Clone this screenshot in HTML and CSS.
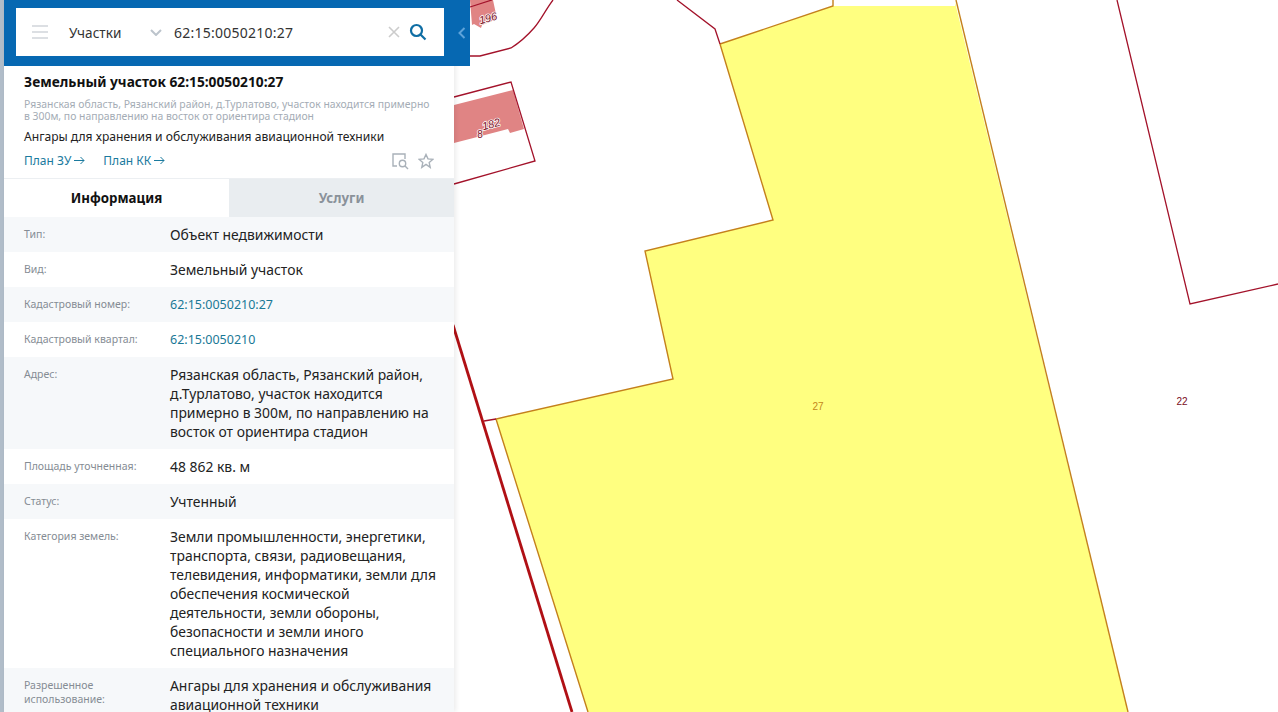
FILE: index.html
```html
<!DOCTYPE html>
<html lang="en">
<head>
    <meta charset="UTF-8">
    <title>Земельный участок 62:15:0050210:27</title>
    <link rel="stylesheet" href="styles.css">
</head>
<body>

    <!-- map layer -->
    <svg class="map" viewBox="0 0 1278 712">
        <polygon class="plot-selected" points="720,44 833,6 955,6 953,-6 1128,712 588,712 496,419 673,379 645,251 773,220"/>
        <rect class="map-blank" x="833" y="0" width="122" height="6"/>
        <polyline class="edge-selected" points="720,44 833,6 833,0"/>
        <polyline class="edge-selected" points="956,0 1128,712"/>
        <polyline class="edge-selected" points="588,712 496,419 673,379 645,251 773,220 720,44"/>

        <polygon class="building" points="454,105 513,90 524,129 510,133 508,129 485,135 454,143"/>
        <polygon class="building" points="470,0 493,0 497,19 482,25 481,28 474,24 472,25"/>
        <polyline class="edge" points="454,97 511,82 535,161 454,184"/>
        <polyline class="edge" points="470,7 492,0"/>
        <path class="edge" d="M553 0C546 9 541 20 534 28C527 36 519 43 511 48L480 56H470"/>
        <polyline class="edge" points="677,0 715,29 720,44"/>
        <polyline class="edge" points="1117,0 1190,304 1278,284"/>
        <polyline class="edge" points="484,421 496,419"/>
        <polyline class="edge-thick" points="453,325 572,712"/>

        <text class="label-num halo" x="480" y="138">8</text>
        <text class="label-num halo italic" x="491" y="128" transform="rotate(-15 491 124)">182</text>
        <text class="label-num halo italic" x="488" y="22" transform="rotate(-15 488 18)">196</text>
        <text class="label-num plot-num" x="818" y="410">27</text>
        <text class="label-num" x="1182" y="405">22</text>
    </svg>

    <div class="page">
        <aside class="panel">

            <div class="search-bar">
                <div class="search-box">
                    <svg class="icon-menu" width="16" height="14" viewBox="0 0 16 14">
                        <path d="M0 1h16M0 7h16M0 13h16"/>
                    </svg>
                    <span class="search-type">Участки</span>
                    <svg class="icon-chevron" width="12" height="7" viewBox="0 0 12 7">
                        <path d="M1 1l5 5 5-5"/>
                    </svg>
                    <span class="search-value">62:15:0050210:27</span>
                    <svg class="icon-clear" width="12" height="12" viewBox="0 0 12 12">
                        <path d="M1 1l10 10M11 1L1 11"/>
                    </svg>
                    <svg class="icon-search" width="18" height="18" viewBox="0 0 18 18">
                        <circle cx="7.5" cy="7.5" r="5.5"/>
                        <path d="M11.5 11.5l5 5"/>
                    </svg>
                </div>
                <div class="collapse-btn">
                    <svg width="8" height="12" viewBox="0 0 8 12"><path d="M6.500 1L1.500 6l5 5"/></svg>
                </div>
            </div>

            <div class="summary">
                <h1>Земельный участок 62:15:0050210:27</h1>
                <p class="summary-address">Рязанская область, Рязанский район, д.Турлатово, участок находится примерно в 300м, по направлению на восток от ориентира стадион</p>
                <p class="summary-use">Ангары для хранения и обслуживания авиационной техники</p>
                <div class="summary-links">
                    <a class="plan-link" href="#plan-zu">План ЗУ
                        <svg class="arrow" width="11" height="9" viewBox="0 0 11 9"><path d="M0 4.500h10M6.500 1l3.500 3.500L6.500 8"/></svg>
                    </a>
                    <a class="plan-link" href="#plan-kk">План КК
                        <svg class="arrow" width="11" height="9" viewBox="0 0 11 9"><path d="M0 4.500h10M6.500 1l3.500 3.500L6.500 8"/></svg>
                    </a>
                    <span class="summary-icons">
                        <svg width="17" height="17" viewBox="0 0 17 17">
                            <path d="M5 13H1V1h12v5"/>
                            <circle cx="10.500" cy="10.500" r="3.200"/>
                            <path d="M13 13l3 3"/>
                        </svg>
                        <svg width="16" height="16" viewBox="0 0 16 16">
                            <path d="M8 1.500l2 4.400 4.800.5-3.600 3.200 1 4.700L8 11.400l-4.200 2.900 1-4.700L1.200 6.400l4.800-.5z"/>
                        </svg>
                    </span>
                </div>
            </div>

            <div class="tabs">
                <div class="tab active">Информация</div>
                <div class="tab">Услуги</div>
            </div>

            <div class="info-list">
                <div class="info-row">
                    <div class="info-label">Тип:</div>
                    <div class="info-value">Объект недвижимости</div>
                </div>
                <div class="info-row">
                    <div class="info-label">Вид:</div>
                    <div class="info-value">Земельный участок</div>
                </div>
                <div class="info-row">
                    <div class="info-label">Кадастровый номер:</div>
                    <div class="info-value"><a href="#parcel">62:15:0050210:27</a></div>
                </div>
                <div class="info-row">
                    <div class="info-label">Кадастровый квартал:</div>
                    <div class="info-value"><a href="#quarter">62:15:0050210</a></div>
                </div>
                <div class="info-row">
                    <div class="info-label">Адрес:</div>
                    <div class="info-value">Рязанская область, Рязанский район, д.Турлатово, участок находится примерно в 300м, по направлению на восток от ориентира стадион</div>
                </div>
                <div class="info-row">
                    <div class="info-label">Площадь уточненная:</div>
                    <div class="info-value">48 862 кв. м</div>
                </div>
                <div class="info-row">
                    <div class="info-label">Статус:</div>
                    <div class="info-value">Учтенный</div>
                </div>
                <div class="info-row">
                    <div class="info-label">Категория земель:</div>
                    <div class="info-value">Земли промышленности, энергетики, транспорта, связи, радиовещания, телевидения, информатики, земли для обеспечения космической деятельности, земли обороны, безопасности и земли иного специального назначения</div>
                </div>
                <div class="info-row">
                    <div class="info-label">Разрешенное использование:</div>
                    <div class="info-value">Ангары для хранения и обслуживания авиационной техники</div>
                </div>
            </div>

        </aside>
    </div>

</body>
</html>
```

FILE: styles.css
```css
html, body {
    height: 100%;
}

body {
    margin: 0;
    overflow: hidden;
    background-color: #fff;
    font-family: "Noto Sans", "Open Sans", sans-serif;
    color: #222;
}

a {
    color: #1b7a9e;
    text-decoration: none;
}

/* map */
.map {
    position: absolute;
    top: 0;
    left: 0;
    width: 1278px;
    height: 712px;
}

.plot-selected {
    fill: #ffff80;
}

.map-blank {
    fill: #fff;
}

.edge-selected,
.edge,
.edge-thick {
    fill: none;
}

.edge-selected {
    stroke: #c4801c;
    stroke-width: 1.4;
}

.edge {
    stroke: #a3122a;
    stroke-width: 1.3;
}

.edge-thick {
    stroke: #b01015;
    stroke-width: 2.8;
}

.building {
    fill: #e08484;
}

.label-num {
    font-family: "Liberation Sans", sans-serif;
    font-size: 10px;
    text-anchor: middle;
    fill: #7a0c1c;
}

.plot-num {
    fill: #c4861c;
}

.italic {
    font-size: 11px;
    font-style: italic;
}

.halo {
    paint-order: stroke;
    stroke: #fff;
    stroke-width: 1.5px;
}

/* left panel */
.page {
    position: relative;
    width: 454px;
    height: 712px;
    padding-left: 4px;
    box-sizing: border-box;
    background-color: #b1bdc9;
}

.panel {
    height: 100%;
    background-color: #fff;
    box-shadow: 2px 0 5px rgba(0, 0, 0, 0.08);
}

.search-bar {
    position: relative;
    height: 66px;
    padding: 8px 10px 10px 12px;
    box-sizing: border-box;
    background-color: #0668b2;
}

.search-box {
    display: flex;
    align-items: center;
    height: 48px;
    padding-left: 16px;
    background-color: #fff;
    font-size: 14px;
    color: #333;
}

.icon-menu path {
    fill: none;
    stroke: #dcdfe3;
    stroke-width: 2;
}

.search-type {
    width: 81px;
    margin-left: 21px;
    font-size: 13.600px;
}

.icon-chevron {
    flex: none;
}

.icon-chevron path {
    fill: none;
    stroke: #bcc4cc;
    stroke-width: 2;
}

.search-value {
    flex: 1;
    margin-left: 12px;
    letter-spacing: 0.25px;
}

.icon-clear path {
    fill: none;
    stroke: #ccc;
    stroke-width: 1.6;
}

.icon-search {
    margin-left: 9px;
    margin-right: 17px;
}

.icon-search circle,
.icon-search path {
    fill: none;
    stroke: #0f6ea4;
    stroke-width: 2.2;
}

.collapse-btn {
    position: absolute;
    top: 0;
    right: -16px;
    display: flex;
    align-items: center;
    justify-content: center;
    width: 16px;
    height: 66px;
    background-color: #0668b2;
}

.collapse-btn path {
    fill: none;
    stroke: #5ea3da;
    stroke-width: 2;
}

/* summary */
.summary {
    height: 113px;
    padding: 7px 20px 0;
    box-sizing: border-box;
    border-bottom: 1px solid #eceff2;
}

.summary h1 {
    margin: 0;
    font-size: 13.750px;
    line-height: 18px;
    font-weight: 700;
    color: #111;
}

.summary-address {
    margin: 7px 0 0;
    font-size: 10.400px;
    line-height: 12px;
    color: #a4acb5;
}

.summary-use {
    margin: 7px 0 0;
    font-size: 12.100px;
    line-height: 16px;
}

.summary-links {
    display: flex;
    align-items: center;
    gap: 18px;
    margin-top: 6px;
    font-size: 12px;
    line-height: 16px;
}

.plan-link {
    display: flex;
    align-items: center;
    gap: 3px;
}

.arrow {
    fill: none;
    stroke: #1b7a9e;
    stroke-width: 1;
}

.summary-icons {
    display: flex;
    gap: 9px;
    margin-top: 2px;
    margin-left: auto;
}

.summary-icons svg {
    fill: none;
    stroke: #a9b1b9;
    stroke-width: 1.4;
}

/* tabs */
.tabs {
    display: flex;
    height: 38px;
    font-size: 13.300px;
    font-weight: 700;
}

.tab {
    flex: 1;
    text-align: center;
    line-height: 38px;
    background-color: #e9edf0;
    color: #8a929a;
}

.tab.active {
    background-color: #fff;
    color: #111;
}

/* info rows */
.info-row {
    display: flex;
    padding: 8px 14px 8px 20px;
    font-size: 13.900px;
    line-height: 19px;
}

.info-row:nth-child(odd) {
    background-color: #f6f8fa;
}

.info-label {
    flex: none;
    width: 126px;
    margin-top: 2px;
    padding-right: 20px;
    font-size: 10.500px;
    line-height: 14px;
    color: #858c94;
}

.info-value {
    flex: 1;
}

.info-value a {
    display: block;
    font-size: 12.500px;
    color: #1a7896;
}
```
